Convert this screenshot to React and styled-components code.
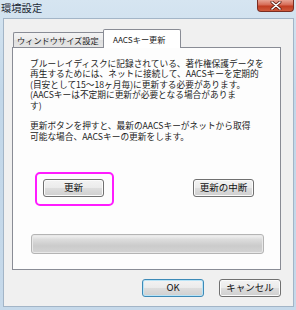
import React from "react";
import styled, { createGlobalStyle, css } from "styled-components";

const Global = createGlobalStyle`
  html, body { margin: 0; padding: 0; }
  body {
    width: 296px;
    height: 310px;
    overflow: hidden;
    background: #c9dcec;
    font-family: "Noto Sans CJK JP", "Noto Sans", sans-serif;
    color: #1b1b1b;
  }
`;

const Window = styled.div`
  width: 296px;
  height: 310px;
  box-sizing: border-box;
  display: flex;
  flex-direction: column;
  background: linear-gradient(#d6e5f1, #c2d7e9 30%, #c6d9ea);
`;

const TitleBar = styled.div`
  height: 18px;
  flex: 0 0 18px;
  display: flex;
  justify-content: space-between;
  align-items: flex-start;
  padding: 0 2px 0 1px;
`;

const Title = styled.div`
  font-size: 10.3px;
  line-height: 12px;
  margin-top: 2px;
  color: #1e2a36;
`;

const CloseButton = styled.div`
  width: 37px;
  height: 12px;
  box-sizing: border-box;
  border: 1px solid #7a2d22;
  border-top: none;
  border-radius: 0 0 4px 4px;
  background: linear-gradient(#e7a394 0%, #d66a55 45%, #c13d22 55%, #cf5a3c 100%);
  display: flex;
  align-items: center;
  justify-content: center;
`;

const Client = styled.div`
  flex: 1;
  margin: 0 2px 3px 3px;
  border: 1px solid #a3b5c7;
  background: #f0f0f0;
  padding: 10px 12px 0 8px;
  display: flex;
  flex-direction: column;
`;

const TabRow = styled.div`
  display: flex;
  align-items: flex-end;
  height: 19px;
  padding-left: 1px;
  margin-bottom: -1px;
  position: relative;
  z-index: 1;
`;

const Tab = styled.div`
  box-sizing: border-box;
  font-size: 8.2px;
  line-height: 1;
  display: flex;
  align-items: center;
  border: 1px solid #898c95;
  border-bottom: none;
  white-space: nowrap;
  ${(p) =>
    p.$active
      ? css`
          height: 19px;
          width: 78px;
          margin-left: -1px;
          padding-left: 9px;
          padding-top: 1px;
          background: #fff;
          border-radius: 2px 2px 0 0;
        `
      : css`
          height: 15px;
          width: 91px;
          margin-bottom: 1px;
          padding-left: 3px;
          background: linear-gradient(#f3f3f3, #ebebeb 50%, #dedede 51%, #e6e6e6);
          border-right: none;
          border-radius: 2px 0 0 0;
        `}
`;

const Panel = styled.div`
  height: 223px;
  box-sizing: border-box;
  border: 1px solid #898c95;
  background: #fdfdfd;
  display: flex;
  flex-direction: column;
  padding-top: 11px;
`;

const Text = styled.div`
  font-size: 8.7px;
  line-height: 10.4px;
  padding-left: 17px;
  white-space: nowrap;
`;

const Line = styled.div`
  height: 10.4px;
`;

const ActionRow = styled.div`
  display: flex;
  justify-content: space-between;
  padding: 0 26px 0 30px;
  margin-top: 37px;
`;

const Highlight = styled.div`
  position: relative;
  &::after {
    content: "";
    position: absolute;
    top: -7px;
    left: -8px;
    right: -10px;
    bottom: -9px;
    border: 2px solid #ff1cff;
    border-radius: 5px;
    pointer-events: none;
  }
`;

const Button = styled.div`
  box-sizing: border-box;
  width: ${(p) => p.$w || 61}px;
  height: 18px;
  display: flex;
  align-items: center;
  justify-content: center;
  font-size: 9.5px;
  line-height: 1;
  border: 1px solid ${(p) => (p.$default ? "#3d8ab7" : "#707070")};
  border-radius: 3px;
  background: linear-gradient(#f3f3f3 0%, #ebebeb 48%, #dddddd 52%, #cfcfcf 100%);
  box-shadow: inset 0 0 0 1px ${(p) => (p.$default ? "#b9e4f7" : "#fbfbfb")};
  color: #111;
`;

const Progress = styled.div`
  height: 20px;
  box-sizing: border-box;
  margin: 37px 16px 0 18px;
  border: 1px solid #b4b4b4;
  border-radius: 3px;
  background: linear-gradient(#f4f4f4 0%, #dcdcdc 25%, #cbcbcb 60%, #d4d4d4 100%);
  box-shadow: inset 0 0 0 1px #e8e8e8;
`;

const Footer = styled.div`
  display: flex;
  justify-content: flex-end;
  gap: 15px;
  margin-top: 9px;
`;

const lines = [
  "ブルーレイディスクに記録されている、著作権保護データを",
  "再生するためには、ネットに接続して、AACSキーを定期的",
  "(目安として15～18ヶ月毎)に更新する必要があります。",
  "(AACSキーは不定期に更新が必要となる場合がありま",
  "す)",
  "",
  "更新ボタンを押すと、最新のAACSキーがネットから取得",
  "可能な場合、AACSキーの更新をします。",
];

export default function App() {
  return (
    <>
      <Global />
      <Window>
        <TitleBar>
          <Title>環境設定</Title>
          <CloseButton>
            <svg width="12" height="9" viewBox="0 0 12 9">
              <path d="M2 1 L10 8 M10 1 L2 8" stroke="#5a1a10" strokeWidth="3" strokeLinecap="round" />
              <path d="M2 1 L10 8 M10 1 L2 8" stroke="#fff" strokeWidth="1.6" strokeLinecap="round" />
            </svg>
          </CloseButton>
        </TitleBar>
        <Client>
          <TabRow>
            <Tab>ウィンドウサイズ設定</Tab>
            <Tab $active>AACSキー更新</Tab>
          </TabRow>
          <Panel>
            <Text>
              {lines.map((l, i) => (
                <Line key={i}>{l}</Line>
              ))}
            </Text>
            <ActionRow>
              <Highlight>
                <Button>更新</Button>
              </Highlight>
              <Button>更新の中断</Button>
            </ActionRow>
            <Progress />
          </Panel>
          <Footer>
            <Button $w={62} $default>OK</Button>
            <Button $w={62}>キャンセル</Button>
          </Footer>
        </Client>
      </Window>
    </>
  );
}
